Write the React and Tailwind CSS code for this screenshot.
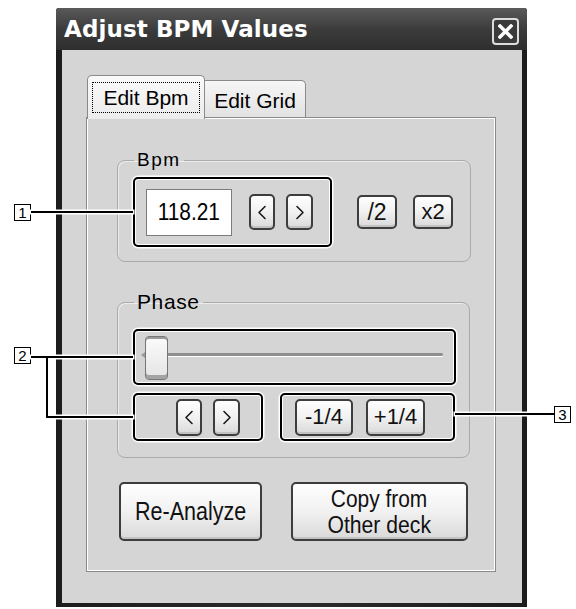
import React from "react";

function Chevron({ dir }) {
  return (
    <svg width="10" height="15" viewBox="0 0 10 15" fill="none">
      {dir === "left" ? (
        <polyline points="8,1.5 2,7.5 8,13.5" stroke="#1a1a1a" strokeWidth="1.6" strokeLinecap="round" strokeLinejoin="round" />
      ) : (
        <polyline points="2,1.5 8,7.5 2,13.5" stroke="#1a1a1a" strokeWidth="1.6" strokeLinecap="round" strokeLinejoin="round" />
      )}
    </svg>
  );
}

const btn =
  "flex items-center justify-center rounded-[5px] border-2 border-[#3d3d3d] bg-linear-to-b from-[#fefefe] via-[#f1f1f1] to-[#d9d9d9] shadow-[inset_0_-2px_0_#c2c2c2] text-[#111]";

function Callout({ className, children }) {
  return (
    <div
      className={
        "rounded-[5px] border-2 border-black shadow-[0_0_0_1.5px_#ffffff,inset_0_0_0_1px_#ffffff] " +
        className
      }
    >
      {children}
    </div>
  );
}

export default function App() {
  return (
    <div className="relative w-[576px] h-[609px] bg-white pl-[56px] pt-[8px] font-['Liberation_Sans',Arial,sans-serif] text-black">
      {/* window */}
      <div className="w-[471px] h-[599px] flex flex-col bg-linear-to-r from-[#1c1c1c] via-[#2c2c2c] to-[#1c1c1c] rounded-t-[3px]">
        {/* title bar */}
        <div className="h-[42px] flex items-center justify-between pl-[8px] pr-[8px] bg-linear-to-b from-[#5a5a5a] via-[#3c3c3c] to-[#2e2e2e] rounded-t-[3px]">
          <span className="font-['DejaVu_Sans',sans-serif] font-bold text-[23px] leading-none text-white tracking-[0.1px] mt-[1px]">
            Adjust BPM Values
          </span>
          <div className="mt-[5px] w-[27px] h-[27px] rounded-[4px] border-2 border-[#dcdcdc] bg-[#3b3b3b] flex items-center justify-center">
            <svg width="15" height="15" viewBox="0 0 15 15">
              <line x1="2" y1="2" x2="13" y2="13" stroke="#ffffff" strokeWidth="3.4" strokeLinecap="square" />
              <line x1="13" y1="2" x2="2" y2="13" stroke="#ffffff" strokeWidth="3.4" strokeLinecap="square" />
            </svg>
          </div>
        </div>

        {/* body */}
        <div className="flex-1 ml-[6px] mr-[5px] mb-[4px] bg-[#d5d5d5] pl-[24px] pt-[25px]">
          {/* tabs */}
          <div className="flex items-end h-[42px] pl-[1px]">
            <div className="relative z-10 -mb-[2px] w-[118px] h-[44px] rounded-t-[5px] border border-b-0 border-[#8a8a8a] bg-linear-to-b from-[#fafafa] to-[#ececec] px-[4px] pt-[6px]">
              <div className="h-[31px] border border-dotted border-black flex items-center justify-center text-[21px] leading-none">
                Edit Bpm
              </div>
            </div>
            <div className="w-[101px] h-[37px] rounded-tr-[5px] border border-l-0 border-b-0 border-[#8a8a8a] bg-linear-to-b from-[#f6f6f6] to-[#e2e2e2] flex items-center justify-center text-[21px] leading-none pt-[2px]">
              Edit Grid
            </div>
          </div>

          {/* panel */}
          <div className="w-[410px] h-[455px] border border-[#8a8a8a] shadow-[inset_1px_1px_0_#ffffff,inset_-1px_-1px_0_#ffffff] bg-[#d5d5d5] pl-[30px] pt-[31px]">
            {/* Bpm group */}
            <fieldset className="w-[354px] h-[113px] rounded-[8px] border border-[#aaaaaa] shadow-[inset_1px_1px_0_#ececec]">
              <legend className="ml-[16px] px-[3px] h-[22px] leading-[22px] text-[19px] tracking-[1.5px]">
                Bpm
              </legend>
              <div className="flex items-center pl-[15px] pt-[6px]">
                <Callout className="w-[199px] h-[70px] flex items-center pl-[11px]">
                  <div className="w-[86px] h-[47px] bg-white border border-[#7c7c7c] flex items-center justify-center text-[24px] leading-none">
                    <span className="inline-block scale-x-[0.87]">118.21</span>
                  </div>
                  <div className={btn + " ml-[17px] w-[26px] h-[36px]"}>
                    <Chevron dir="left" />
                  </div>
                  <div className={btn + " ml-[11px] w-[27px] h-[36px]"}>
                    <Chevron dir="right" />
                  </div>
                </Callout>
                <div className={btn + " ml-[25px] w-[40px] h-[34px] text-[23px] leading-none"}>/2</div>
                <div className={btn + " ml-[16px] w-[40px] h-[34px] text-[22px] leading-none"}>x2</div>
              </div>
            </fieldset>

            {/* Phase group */}
            <fieldset className="mt-[28px] w-[353px] h-[168px] rounded-[8px] border border-[#aaaaaa] shadow-[inset_1px_1px_0_#ececec]">
              <legend className="ml-[16px] px-[3px] h-[24px] leading-[24px] text-[21px] tracking-[0.6px]">
                Phase
              </legend>
              <div className="flex flex-col pl-[15px] pt-[15px]">
                <Callout className="w-[323px] h-[56px] relative">
                  <div className="absolute left-[10px] right-[11px] top-[22px] h-[3px] rounded-r-full bg-[#8e8e8e] shadow-[0_1px_0_#ffffff]" />
                  <div className="absolute left-[6px] top-[21px] w-0 h-0 border-y-[3px] border-y-transparent border-r-[4px] border-r-[#9a9a9a]" />
                  <div className="absolute left-[10px] top-[5px] w-[23px] h-[44px] rounded-[4px] border border-[#767676] bg-linear-to-b from-[#fbfbfb] to-[#e4e4e4] shadow-[inset_0_-4px_0_#a3a3a3,inset_0_2px_0_#9a9a9a]" />
                </Callout>
                <div className="flex mt-[8px]">
                  <Callout className="w-[130px] h-[48px] flex items-center pl-[41px]">
                    <div className={btn + " w-[26px] h-[37px]"}>
                      <Chevron dir="left" />
                    </div>
                    <div className={btn + " ml-[11px] w-[27px] h-[37px]"}>
                      <Chevron dir="right" />
                    </div>
                  </Callout>
                  <Callout className="ml-[17px] w-[175px] h-[48px] flex items-center pl-[13px]">
                    <div className={btn + " w-[58px] h-[37px] text-[22px] leading-none"}>-1/4</div>
                    <div className={btn + " ml-[13px] w-[59px] h-[37px] text-[22px] leading-none"}>+1/4</div>
                  </Callout>
                </div>
              </div>
            </fieldset>

            {/* bottom buttons */}
            <div className="flex mt-[24px] pl-[2px]">
              <div className={btn + " w-[143px] h-[59px] text-[25px] leading-none"}>
                <span className="inline-block scale-x-[0.86]">Re-Analyze</span>
              </div>
              <div className={btn + " ml-[29px] w-[177px] h-[59px] flex-col text-[23px] leading-[26px]"}>
                <span className="inline-block scale-x-[0.91]">Copy from</span>
                <span className="inline-block scale-x-[0.92]">Other deck</span>
              </div>
            </div>
          </div>
        </div>
      </div>

      {/* callout annotations */}
      <div className="absolute left-[14px] top-[204px] w-[17px] h-[17px] border border-black bg-white flex items-center justify-center text-[15px] leading-none">1</div>
      <div className="absolute left-[31px] top-[211px] w-[102px] h-[2px] bg-black shadow-[0_0_0_1.5px_#ffffff]" />

      <div className="absolute left-[14px] top-[347px] w-[17px] h-[17px] border border-black bg-white flex items-center justify-center text-[15px] leading-none">2</div>
      <div className="absolute left-[31px] top-[356px] w-[102px] h-[2px] bg-black shadow-[0_0_0_1.5px_#ffffff]" />
      <div className="absolute left-[46px] top-[356px] w-[2px] h-[62px] bg-black shadow-[0_0_0_1.5px_#ffffff]" />
      <div className="absolute left-[46px] top-[416px] w-[87px] h-[2px] bg-black shadow-[0_0_0_1.5px_#ffffff]" />
      <div className="absolute left-[31px] top-[356px] w-[102px] h-[2px] bg-black" />
      <div className="absolute left-[46px] top-[356px] w-[2px] h-[62px] bg-black" />

      <div className="absolute left-[455px] top-[413px] w-[99px] h-[2px] bg-black shadow-[0_0_0_1.5px_#ffffff]" />
      <div className="absolute left-[554px] top-[406px] w-[17px] h-[17px] border border-black bg-white flex items-center justify-center text-[15px] leading-none">3</div>
    </div>
  );
}
